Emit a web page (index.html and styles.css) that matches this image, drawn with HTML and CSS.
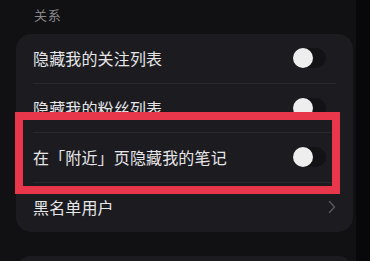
FILE: index.html
```html
<!DOCTYPE html>
<html lang="zh-CN">

<head>
    <meta charset="UTF-8">
    <meta name="viewport" content="width=device-width, initial-scale=1.0">
    <title>隐私设置</title>
    <link rel="stylesheet" href="styles.css">
</head>

<body>
    <div class="page">
        <div class="section-title">关系</div>

        <div class="card">
            <div class="row">
                <span class="label">隐藏我的关注列表</span>
                <span class="switch"><span class="knob"></span></span>
            </div>
            <div class="row">
                <span class="label">隐藏我的粉丝列表</span>
                <span class="switch"><span class="knob"></span></span>
            </div>
            <div class="row">
                <span class="label">在「附近」页隐藏我的笔记</span>
                <span class="switch"><span class="knob"></span></span>
            </div>
            <div class="row last">
                <span class="label">黑名单用户</span>
                <svg class="chevron" width="8" height="14" viewBox="0 0 8 14">
                    <path d="M1.5 1.5 L6.5 7 L1.5 12.5" fill="none" stroke="#56565c" stroke-width="1.5" stroke-linecap="round" stroke-linejoin="round" />
                </svg>
            </div>
        </div>

        <div class="card next"></div>

        <!-- annotation box drawn over the screenshot -->
        <div class="highlight"></div>
    </div>
</body>

</html>
```

FILE: styles.css
```css
html,
body {
    margin: 0;
    padding: 0;
    background: #08080a;
    font-family: "Noto Sans CJK SC", "Noto Sans", sans-serif;
}

.page {
    position: relative;
    width: 356px;
    height: 261px;
    overflow: hidden;
    background: #111113;
}

.section-title {
    padding: 5px 0 0 34px;
    height: 34px;
    box-sizing: border-box;
    font-size: 13px;
    line-height: 20px;
    letter-spacing: 0.8px;
    color: #86868b;
}

.card {
    margin-left: 16px;
    width: 337px;
    box-sizing: border-box;
    padding: 0 17px;
    background: #1c1c20;
    border-radius: 15px;
}

.card.next {
    margin-top: 24px;
    height: 40px;
}

.row {
    display: flex;
    align-items: center;
    justify-content: space-between;
    height: 49.5px;
    box-sizing: border-box;
    padding-right: 10px;
    border-bottom: 1px solid #28282d;
}

.row.last {
    border-bottom: none;
    padding-right: 0;
}

.label {
    font-size: 16px;
    color: #e6e6e8;
    letter-spacing: 0.15px;
}

.switch {
    position: relative;
    width: 33px;
    height: 20px;
    border-radius: 10px;
    background: #131316;
}

.knob {
    position: absolute;
    left: 0;
    top: 0;
    width: 20px;
    height: 20px;
    border-radius: 50%;
    background: #eeeeef;
}

.highlight {
    position: absolute;
    left: 15px;
    top: 112px;
    width: 325px;
    height: 82px;
    box-sizing: border-box;
    border: 8px solid #e8374b;
}
```
